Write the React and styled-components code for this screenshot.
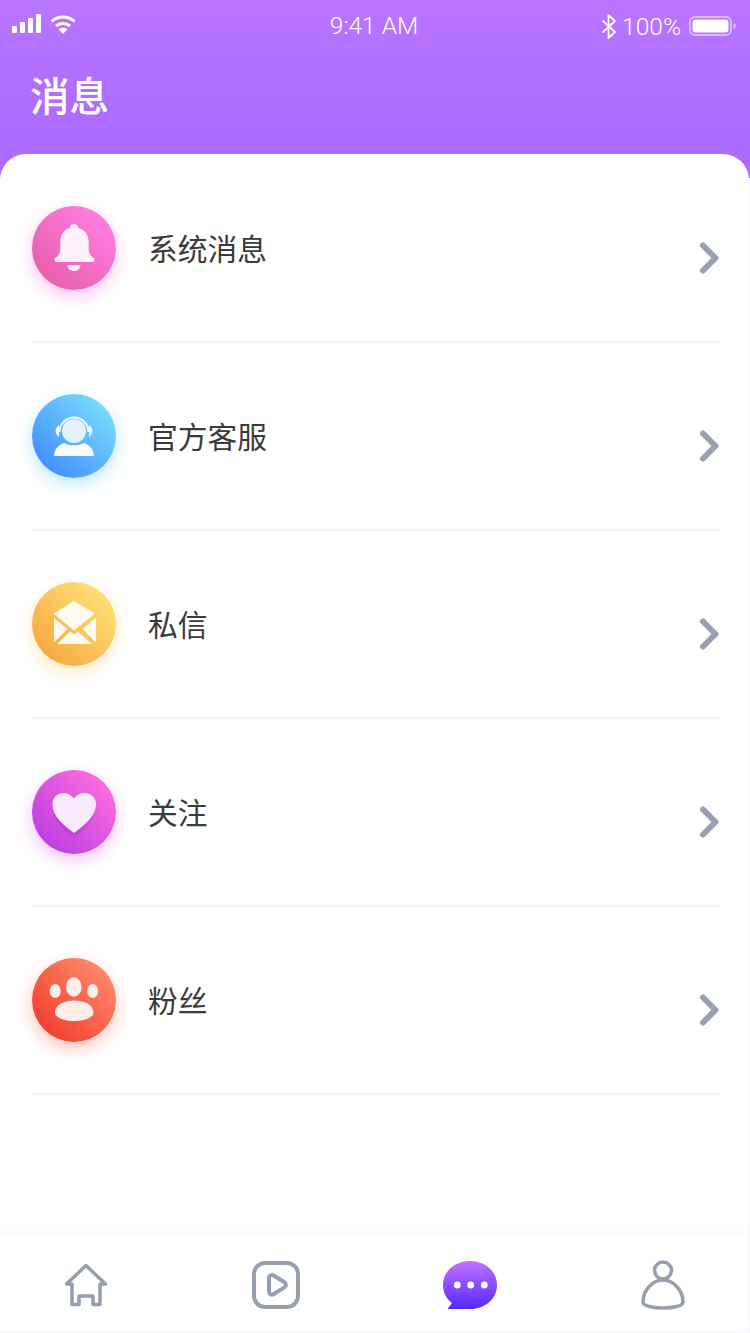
import styled, { createGlobalStyle } from "styled-components";

const GlobalStyle = createGlobalStyle`
    html, body {
        margin: 0;
        padding: 0;
        background: #f7f6fd;
    }
    * {
        box-sizing: border-box;
    }
`;

const BellIcon = () => (
    <svg width="84" height="84" viewBox="0 0 84 84">
        <path
            fill="#fdf0fa"
            d="M42 18c2.400 0 4 1.700 4 3.800 7 1.900 10.700 7.400 10.700 14.200v7.500c0 3.600 1.800 6.500 4.800 8.300 1.400.8 1.200 4.200-.7 4.200H24.200c-1.900 0-2.100-3.400-.7-4.200 3-1.800 4.800-4.700 4.800-8.300V36c0-6.800 3.700-12.300 9.700-14.200 0-2.100 1.600-3.800 4-3.800z"
        />
        <path fill="#fdf0fa" d="M35.500 59h13c0 3.600-2.900 6-6.500 6s-6.500-2.400-6.500-6z" />
    </svg>
);

const HeadsetIcon = () => (
    <svg width="84" height="84" viewBox="0 0 84 84">
        <circle cx="42" cy="37" r="12" fill="#e6f1ff" />
        <path fill="none" stroke="#f4f9ff" strokeWidth="2" d="M27.500 38a14.500 14.500 0 0 1 29 0" />
        <path fill="#f4f9ff" d="M27 31c-2.500 2-3.500 4-3.500 6s1 4 3.500 6zM57 31c2.500 2 3.500 4 3.500 6s-1 4-3.500 6z" />
        <path
            fill="#f7fbff"
            d="M32 49c3 1.500 6 2.300 10 2.300s7-.8 10-2.300c6 2 9.500 6 10 13H22c.5-7 4-11 10-13z"
        />
    </svg>
);

const MailIcon = () => (
    <svg width="84" height="84" viewBox="0 0 84 84">
        <path fill="#fffaf0" d="M42 19l21 12.500-21 17-20.500-17z" />
        <path fill="#fffaf0" d="M22 36l13.500 11L22 60.500zM64 36L50.500 47 64 60.500z" />
        <path fill="#fffaf0" d="M25 62l13-12.500 4 3 4-3L60 62z" />
    </svg>
);

const HeartIcon = () => (
    <svg width="84" height="84" viewBox="0 0 84 84">
        <path
            fill="#a92fd0"
            opacity=".35"
            d="M42 68C31 59 21 51 21 39c0-7 5.500-11 11-11 4 0 7.500 2 10 5.500C44.500 30 48 28 52 28c5.500 0 11 4 11 11 0 12-10 20-21 29z"
        />
        <path
            fill="#f9ebff"
            d="M42 63C30.500 54 20.500 46.500 20.500 34c0-6.500 5-11 11-11 4.300 0 8 2 10.500 5.500C44.500 25 48.200 23 52.500 23c6 0 11.500 4.500 11.500 11 0 12.500-10.500 20-22 29z"
        />
    </svg>
);

const PawIcon = () => (
    <svg width="84" height="84" viewBox="0 0 84 84">
        <ellipse cx="23.200" cy="33" rx="5.500" ry="7" fill="#fdeeea" />
        <ellipse cx="41.800" cy="29" rx="7.800" ry="9.700" fill="#fdeeea" />
        <ellipse cx="60.700" cy="33" rx="5.500" ry="7" fill="#fdeeea" />
        <path
            fill="#fdeeea"
            d="M42 42.500c10 0 19.500 4 19.500 12 0 5-9 8.500-19.500 8.500S23 59.500 23 54.500c0-8 9.500-12 19-12z"
        />
    </svg>
);

const Chevron = () => (
    <ChevronMark width="22" height="34" viewBox="0 0 22 34">
        <path
            fill="none"
            stroke="#99a1b1"
            strokeWidth="6"
            strokeLinecap="round"
            strokeLinejoin="round"
            d="M5 4.500L17.500 17 5 29.500"
        />
    </ChevronMark>
);

const HomeIcon = () => (
    <svg width="44" height="44" viewBox="0 0 44 44">
        <path
            fill="none"
            stroke="#979fae"
            strokeWidth="3.500"
            strokeLinejoin="round"
            d="M8 21H2.500L22 2.500 41.500 21H36v20.500h-7V33H15v8.500H8z"
        />
    </svg>
);

const PlayIcon = () => (
    <svg width="48" height="48" viewBox="0 0 48 48">
        <rect x="2" y="2" width="44" height="44" rx="11" fill="none" stroke="#979fae" strokeWidth="4" />
        <path
            fill="none"
            stroke="#979fae"
            strokeWidth="4"
            strokeLinejoin="round"
            d="M17 17c0-2.300 2.400-3.700 4.400-2.600l11 6.800c1.900 1.200 1.900 4 0 5.200l-11 6.800c-2 1.100-4.400-.3-4.400-2.600z"
        />
    </svg>
);

const ChatIcon = () => (
    <svg width="54" height="48" viewBox="0 0 54 48">
        <defs>
            <linearGradient id="chatFill" x1="0" y1="0" x2="0" y2="1">
                <stop offset="0" stopColor="#c272ff" />
                <stop offset="1" stopColor="#5528ff" />
            </linearGradient>
        </defs>
        <path
            fill="url(#chatFill)"
            d="M27 0c15 0 27 10 27 24S42 48 27 48H4.500L9 42C3.500 38 0 31.500 0 24 0 10 12 0 27 0z"
        />
        <circle cx="14.300" cy="24" r="3.400" fill="#fff" />
        <circle cx="27.700" cy="24" r="3.400" fill="#fff" />
        <circle cx="41.300" cy="24" r="3.400" fill="#fff" />
    </svg>
);

const UserIcon = () => (
    <svg width="44" height="50" viewBox="0 0 44 50">
        <circle cx="22" cy="10.500" r="8.500" fill="none" stroke="#979fae" strokeWidth="3.500" />
        <path
            fill="none"
            stroke="#979fae"
            strokeWidth="3.500"
            d="M22 20c10 0 20 10 20 22 0 4-10 6-20 6S2 46 2 42c0-12 10-22 20-22z"
        />
    </svg>
);

const SignalIcon = () => (
    <svg width="29" height="19" viewBox="0 0 29 19">
        <rect x="0" y="12" width="5" height="7" rx="1" fill="#fff" />
        <rect x="8" y="8" width="5" height="11" rx="1" fill="#fff" />
        <rect x="16" y="4" width="5" height="15" rx="1" fill="#fff" />
        <rect x="24" y="0" width="5" height="19" rx="1" fill="#fff" />
    </svg>
);

const WifiIcon = () => (
    <svg width="26" height="20" viewBox="0 0 26 20">
        <path fill="none" stroke="#fff" strokeWidth="3" d="M1.500 7.500c6.500-6 16.500-6 23 0" />
        <path fill="none" stroke="#fff" strokeWidth="3" d="M6 12c4-3.500 10-3.500 14 0" />
        <path fill="#fff" d="M13 20l-4.500-4.800c2.500-2 6.500-2 9 0z" />
    </svg>
);

const BluetoothIcon = () => (
    <svg width="16" height="25" viewBox="0 0 16 25">
        <path
            fill="none"
            stroke="#fff"
            strokeWidth="1.800"
            d="M1.500 6.500L14 18l-6.500 6V1L14 7 1.500 18.500"
        />
    </svg>
);

const BatteryIcon = () => (
    <svg width="47" height="20" viewBox="0 0 47 20">
        <rect x="1" y="1" width="41" height="18" rx="5" fill="none" stroke="#fff" strokeOpacity=".5" strokeWidth="2" />
        <rect x="3.500" y="3.500" width="36" height="13" rx="3" fill="#fff" />
        <path d="M44.500 7c1.500.4 2.500 1.500 2.500 3s-1 2.600-2.500 3z" fill="#fff" fillOpacity=".5" />
    </svg>
);

const rows = [
    { label: "系统消息", from: "#ff80e6", to: "#e75ca6", glow: "rgba(255, 90, 210, .38)", Icon: BellIcon },
    { label: "官方客服", from: "#7ce0ff", to: "#3e8afc", glow: "rgba(80, 190, 255, .38)", Icon: HeadsetIcon },
    { label: "私信", from: "#ffe57c", to: "#f5a53c", glow: "rgba(255, 200, 90, .38)", Icon: MailIcon },
    { label: "关注", from: "#ff70de", to: "#b93be0", glow: "rgba(225, 90, 240, .38)", Icon: HeartIcon },
    { label: "粉丝", from: "#ff8d6e", to: "#f23a2c", glow: "rgba(255, 90, 60, .38)", Icon: PawIcon },
];

const App = () => {
    return (
        <Screen>
            <GlobalStyle />
            <Header>
                <StatusBar>
                    <StatusLeft>
                        <SignalIcon />
                        <WifiIcon />
                    </StatusLeft>
                    <StatusTime>9:41 AM</StatusTime>
                    <StatusRight>
                        <BluetoothIcon />
                        <StatusPercent>100%</StatusPercent>
                        <BatteryIcon />
                    </StatusRight>
                </StatusBar>
                <Title>消息</Title>
            </Header>
            <Sheet>
                {rows.map(({ label, from, to, glow, Icon }) => (
                    <Row key={label}>
                        <Disc $from={from} $to={to} $glow={glow}>
                            <Icon />
                        </Disc>
                        <Label>{label}</Label>
                        <Chevron />
                    </Row>
                ))}
            </Sheet>
            <TabBar>
                <HomeIcon />
                <PlayIcon />
                <ChatIcon />
                <UserIcon />
            </TabBar>
        </Screen>
    );
};

const Screen = styled.div`
    width: 750px;
    height: 1333px;
    display: flex;
    flex-direction: column;
    overflow: hidden;
    background: #f7f6fd;
    font-family: "Noto Sans CJK SC", "Noto Sans", sans-serif;
`;

const Header = styled.header`
    height: 178px;
    margin-bottom: -24px;
    flex-shrink: 0;
    background: linear-gradient(180deg, #b975ff 0%, #aa69ff 100%);
`;

const StatusBar = styled.div`
    height: 48px;
    padding: 4px 14px 0 12px;
    display: grid;
    grid-template-columns: 1fr auto 1fr;
    align-items: center;
    color: #fff;
    font-family: Roboto, "Liberation Sans", sans-serif;
    font-weight: 300;
    font-size: 24.5px;
`;

const StatusLeft = styled.div`
    display: flex;
    align-items: flex-start;
    gap: 9px;
    margin-top: -4px;
`;

const StatusTime = styled.div`
    margin-bottom: 1px;
`;

const StatusRight = styled.div`
    display: flex;
    justify-content: flex-end;
    align-items: center;
    gap: 5px;
`;

const StatusPercent = styled.span`
    margin-right: 3px;
`;

const Title = styled.h1`
    margin: 0;
    padding: 18px 0 0 30px;
    color: #fff;
    font-size: 39.5px;
    line-height: 56px;
    font-weight: 500;
`;

const Sheet = styled.main`
    position: relative;
    flex: 1;
    width: 749px;
    padding-top: 1px;
    background: #fff;
    border-radius: 26px 26px 0 0;
`;

const Row = styled.div`
    height: 188px;
    margin: 0 29px 0 32px;
    padding-top: 51px;
    display: flex;
    align-items: flex-start;
    border-bottom: 2px solid #f1f2f6;
`;

const Disc = styled.div`
    width: 84px;
    height: 84px;
    flex-shrink: 0;
    border-radius: 50%;
    background: linear-gradient(225deg, ${(p) => p.$from} 8%, ${(p) => p.$to} 92%);
    box-shadow: 0 6px 16px ${(p) => p.$glow};

    svg {
        display: block;
    }
`;

const Label = styled.div`
    flex: 1;
    margin-left: 32px;
    height: 84px;
    line-height: 82px;
    font-size: 29.75px;
    color: #3a3a3a;
`;

const ChevronMark = styled.svg`
    margin-top: 35px;
    flex-shrink: 0;
`;

const TabBar = styled.nav`
    position: relative;
    height: 96px;
    margin-bottom: 2px;
    flex-shrink: 0;
    width: 749px;
    padding: 3px 64px 0 64px;
    display: flex;
    justify-content: space-between;
    align-items: center;
    background: #fff;
    box-shadow: 0 -8px 12px rgba(225, 222, 250, 0.12);
`;

export default App;
